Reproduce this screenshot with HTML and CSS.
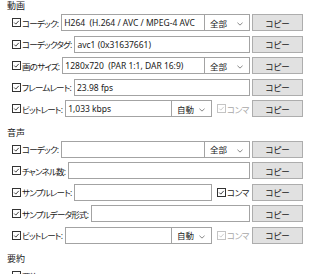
FILE: index.html
```html
<!DOCTYPE html>
<html lang="ja">
<head>
    <meta charset="UTF-8">
    <title>情報</title>
    <link rel="stylesheet" href="styles.css">
</head>
<body>
    <div class="panel">
        <section class="group">
            <h2 class="group-title">動画</h2>
            <div class="row">
                <label class="check"><span class="box"><svg viewBox="0 0 9 9"><path d="M1.6 4.6 L3.6 6.6 L7.4 2.4"/></svg></span>コーデック:</label>
                <div class="fields">
                    <input class="text" type="text" value="H264  (H.264 / AVC / MPEG-4 AVC">
                    <div class="select wide"><span>全部</span><svg class="chev" viewBox="0 0 7 4"><path d="M0.5 0.5 L3.5 3.3 L6.5 0.5"/></svg></div>
                </div>
                <button class="copy">コピー</button>
            </div>
            <div class="row">
                <label class="check"><span class="box"><svg viewBox="0 0 9 9"><path d="M1.6 4.6 L3.6 6.6 L7.4 2.4"/></svg></span>コーデックタグ:</label>
                <div class="fields">
                    <input class="text" type="text" value="avc1 (0x31637661)">
                </div>
                <button class="copy">コピー</button>
            </div>
            <div class="row">
                <label class="check"><span class="box"><svg viewBox="0 0 9 9"><path d="M1.6 4.6 L3.6 6.6 L7.4 2.4"/></svg></span>画のサイズ:</label>
                <div class="fields">
                    <input class="text" type="text" value="1280x720  (PAR 1:1, DAR 16:9)">
                    <div class="select wide"><span>全部</span><svg class="chev" viewBox="0 0 7 4"><path d="M0.5 0.5 L3.5 3.3 L6.5 0.5"/></svg></div>
                </div>
                <button class="copy">コピー</button>
            </div>
            <div class="row">
                <label class="check"><span class="box"><svg viewBox="0 0 9 9"><path d="M1.6 4.6 L3.6 6.6 L7.4 2.4"/></svg></span>フレームレート:</label>
                <div class="fields">
                    <input class="text" type="text" value="23.98 fps">
                </div>
                <button class="copy">コピー</button>
            </div>
            <div class="row">
                <label class="check"><span class="box"><svg viewBox="0 0 9 9"><path d="M1.6 4.6 L3.6 6.6 L7.4 2.4"/></svg></span>ビットレート:</label>
                <div class="fields">
                    <input class="text" type="text" value="1,033 kbps">
                    <div class="select narrow"><span>自動</span><svg class="chev" viewBox="0 0 7 4"><path d="M0.5 0.5 L3.5 3.3 L6.5 0.5"/></svg></div>
                    <label class="comma disabled"><span class="box"><svg viewBox="0 0 9 9"><path d="M1.6 4.6 L3.6 6.6 L7.4 2.4"/></svg></span>コンマ</label>
                </div>
                <button class="copy">コピー</button>
            </div>
        </section>

        <section class="group">
            <h2 class="group-title">音声</h2>
            <div class="row">
                <label class="check"><span class="box"><svg viewBox="0 0 9 9"><path d="M1.6 4.6 L3.6 6.6 L7.4 2.4"/></svg></span>コーデック:</label>
                <div class="fields">
                    <input class="text" type="text" value="">
                    <div class="select wide"><span>全部</span><svg class="chev" viewBox="0 0 7 4"><path d="M0.5 0.5 L3.5 3.3 L6.5 0.5"/></svg></div>
                </div>
                <button class="copy">コピー</button>
            </div>
            <div class="row">
                <label class="check"><span class="box"><svg viewBox="0 0 9 9"><path d="M1.6 4.6 L3.6 6.6 L7.4 2.4"/></svg></span>チャンネル数:</label>
                <div class="fields">
                    <input class="text" type="text" value="">
                </div>
                <button class="copy">コピー</button>
            </div>
            <div class="row">
                <label class="check"><span class="box"><svg viewBox="0 0 9 9"><path d="M1.6 4.6 L3.6 6.6 L7.4 2.4"/></svg></span>サンプルレート:</label>
                <div class="fields">
                    <input class="text" type="text" value="">
                    <label class="comma"><span class="box"><svg viewBox="0 0 9 9"><path d="M1.6 4.6 L3.6 6.6 L7.4 2.4"/></svg></span>コンマ</label>
                </div>
                <button class="copy">コピー</button>
            </div>
            <div class="row">
                <label class="check"><span class="box"><svg viewBox="0 0 9 9"><path d="M1.6 4.6 L3.6 6.6 L7.4 2.4"/></svg></span>サンプルデータ形式:</label>
                <div class="fields">
                    <input class="text" type="text" value="">
                </div>
                <button class="copy">コピー</button>
            </div>
            <div class="row">
                <label class="check"><span class="box"><svg viewBox="0 0 9 9"><path d="M1.6 4.6 L3.6 6.6 L7.4 2.4"/></svg></span>ビットレート:</label>
                <div class="fields">
                    <input class="text" type="text" value="">
                    <div class="select narrow"><span>自動</span><svg class="chev" viewBox="0 0 7 4"><path d="M0.5 0.5 L3.5 3.3 L6.5 0.5"/></svg></div>
                    <label class="comma disabled"><span class="box"><svg viewBox="0 0 9 9"><path d="M1.6 4.6 L3.6 6.6 L7.4 2.4"/></svg></span>コンマ</label>
                </div>
                <button class="copy">コピー</button>
            </div>
        </section>

        <section class="group">
            <h2 class="group-title">要約</h2>
            <div class="row">
                <label class="check"><span class="box"><svg viewBox="0 0 9 9"><path d="M1.6 4.6 L3.6 6.6 L7.4 2.4"/></svg></span>要約</label>
            </div>
        </section>
    </div>
</body>
</html>
```

FILE: styles.css
```css
body {
    margin: 0;
    background-color: #fff;
    color: #1a1a1a;
    font-family: "Noto Sans", "Noto Sans CJK JP", sans-serif;
    font-size: 8.5px;
    font-feature-settings: "palt";
}

.panel {
    width: 320px;
    overflow: hidden;
}

.group-title {
    margin: 7px 0 0 7px;
    font-size: 9px;
    line-height: 12px;
    font-weight: normal;
}

.group:first-child .group-title {
    margin-top: 0;
}

.row {
    display: flex;
    align-items: center;
    height: 21.5px;
    width: 291px;
    padding-left: 12px;
}

.check {
    display: flex;
    align-items: center;
    gap: 1px;
    white-space: nowrap;
    margin-right: 3px;
    letter-spacing: -0.8px;
    flex-shrink: 0;
}

.box {
    width: 9px;
    height: 9px;
    box-sizing: border-box;
    border: 1px solid #333;
    background-color: #fff;
    display: flex;
    flex-shrink: 0;
}

.box svg {
    width: 7px;
    height: 7px;
    margin: auto;
}

.box path {
    fill: none;
    stroke: #222;
    stroke-width: 1.1;
}

.fields {
    flex: 1;
    min-width: 0;
    display: flex;
    height: 17px;
}

.text {
    flex: 1;
    min-width: 0;
    height: 17px;
    box-sizing: border-box;
    margin: 0;
    padding: 0 2px;
    border: 1px solid #a3a3a3;
    font: inherit;
    color: #1a1a1a;
    outline: none;
}

.select {
    position: relative;
    height: 17px;
    box-sizing: border-box;
    border: 1px solid #a3a3a3;
    border-left: none;
    display: flex;
    align-items: center;
    padding-left: 5px;
    flex-shrink: 0;
}

.select.wide {
    width: 45px;
}

.select.narrow {
    width: 40px;
}

.chev {
    position: absolute;
    right: 6px;
    top: 7px;
    width: 6px;
    height: 4px;
}

.chev path {
    fill: none;
    stroke: #666;
    stroke-width: 0.9;
}

.comma {
    width: 38px;
    display: flex;
    align-items: center;
    gap: 1px;
    padding-left: 5px;
    box-sizing: border-box;
    white-space: nowrap;
    letter-spacing: -0.4px;
    flex-shrink: 0;
}

.comma.disabled {
    color: #a8a8a8;
}

.comma.disabled .box {
    border-color: #c4c4c4;
}

.comma.disabled path {
    stroke: #c4c4c4;
}

.copy {
    width: 51px;
    height: 17px;
    margin-left: 2px;
    padding: 0;
    box-sizing: border-box;
    background-color: #e1e1e1;
    border: 1px solid #adadad;
    font: inherit;
    color: #1a1a1a;
    flex-shrink: 0;
}
```
